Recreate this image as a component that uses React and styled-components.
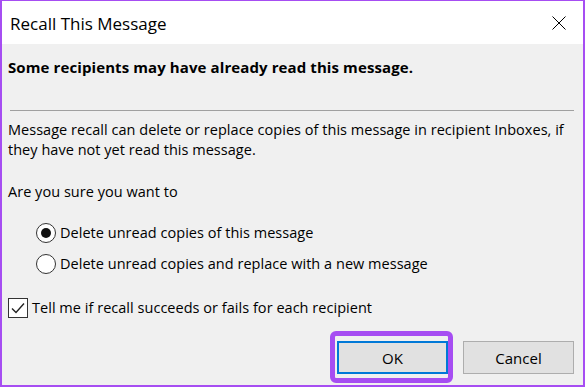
import styled, { createGlobalStyle } from "styled-components";

const GlobalStyle = createGlobalStyle`
    html, body {
        margin: 0;
        padding: 0;
        background: #f0f0f0;
    }
    body {
        font-family: "Open Sans", "Noto Sans", "Liberation Sans", sans-serif;
        color: #000;
    }
`;

const RecallDialog = () => {
    return (
        <Window>
            <GlobalStyle/>
            <TitleBar>
                <span className={'title'}>Recall This Message</span>
                <CloseButton aria-label={'Close'}>
                    <svg width="14" height="14" viewBox="0 0 14 14">
                        <path d="M0.5 0.5 L13.5 13.5 M13.5 0.5 L0.5 13.5" stroke="#000" strokeWidth="1" fill="none"/>
                    </svg>
                </CloseButton>
            </TitleBar>
            <Body>
                <Heading>Some recipients may have already read this message.</Heading>
                <Separator/>
                <Paragraph>
                    Message recall can delete or replace copies of this message in recipient Inboxes, if
                    they have not yet read this message.
                </Paragraph>
                <Question>Are you sure you want to</Question>
                <Options>
                    <OptionRow>
                        <Radio $checked/>
                        <span>Delete unread copies of this message</span>
                    </OptionRow>
                    <OptionRow>
                        <Radio/>
                        <span>Delete unread copies and replace with a new message</span>
                    </OptionRow>
                </Options>
                <CheckRow>
                    <CheckBox>
                        <svg width="14" height="12" viewBox="0 0 14 12">
                            <path d="M1 6.5 L5 10.5 L13 1.5" stroke="#222" strokeWidth="1.4" fill="none"/>
                        </svg>
                    </CheckBox>
                    <span>Tell me if recall succeeds or fails for each recipient</span>
                </CheckRow>
                <Footer>
                    <Button $primary $highlight>OK</Button>
                    <Button>Cancel</Button>
                </Footer>
            </Body>
        </Window>
    );
};

const Window = styled.div`
    box-sizing: border-box;
    width: 585px;
    height: 387px;
    border: 2px solid #a64df2;
    border-top-width: 1px;
    display: flex;
    flex-direction: column;
    background: #f0f0f0;
    overflow: hidden;
`;

const TitleBar = styled.div`
    height: 43px;
    flex-shrink: 0;
    background: #fff;
    display: flex;
    align-items: center;
    justify-content: space-between;
    padding: 0 17px 0 8px;

    .title {
        font-size: 17px;
        letter-spacing: 0;
        margin-top: 1px;
    }
`;

const CloseButton = styled.div`
    display: flex;
    align-items: center;
    justify-content: center;
    width: 14px;
    height: 14px;
`;

const Body = styled.div`
    flex: 1;
    display: flex;
    flex-direction: column;
    padding: 13px 9px 0 6px;
    font-size: 14.5px;
    line-height: 20px;
    letter-spacing: 0.03px;
`;

const Heading = styled.div`
    font-weight: 700;
    font-size: 15px;
    letter-spacing: 0.1px;
`;

const Separator = styled.div`
    height: 1px;
    background: #a0a0a0;
    margin: 33px 0 0 2px;
`;

const Paragraph = styled.p`
    margin: 9px 0 0 0;
`;

const Question = styled.div`
    margin-top: 22px;
`;

const Options = styled.div`
    display: flex;
    flex-direction: column;
    gap: 7px;
    margin-top: 19px;
    padding-left: 28px;
`;

const OptionRow = styled.label`
    display: flex;
    align-items: center;
    gap: 4px;
    height: 24px;
`;

const Radio = styled.span`
    box-sizing: border-box;
    width: 20px;
    height: 20px;
    border-radius: 50%;
    border: 1px solid #333;
    background: #fff;
    display: flex;
    align-items: center;
    justify-content: center;

    &::after {
        content: '';
        width: 10px;
        height: 10px;
        border-radius: 50%;
        background: #111;
        display: ${({$checked}) => ($checked ? 'block' : 'none')};
    }
`;

const CheckRow = styled.label`
    display: flex;
    align-items: center;
    gap: 4px;
    height: 24px;
    margin-top: 20px;
`;

const CheckBox = styled.span`
    box-sizing: border-box;
    width: 20px;
    height: 20px;
    border: 1px solid #333;
    background: #fff;
    display: flex;
    align-items: center;
    justify-content: center;
`;

const Footer = styled.div`
    display: flex;
    justify-content: flex-end;
    gap: 15px;
    margin-top: 21px;
`;

const Button = styled.div`
    position: relative;
    box-sizing: border-box;
    width: 111px;
    height: 33px;
    display: flex;
    align-items: center;
    justify-content: center;
    background: #e1e1e1;
    border: ${({$primary}) => ($primary ? '2px solid #0078d7' : '1px solid #adadad')};
    font-size: 15px;

    &::after {
        content: '';
        display: ${({$highlight}) => ($highlight ? 'block' : 'none')};
        position: absolute;
        top: -12px;
        bottom: -11px;
        left: -9px;
        right: -7px;
        border: 5px solid #a64df2;
        border-radius: 6px;
    }
`;

export default RecallDialog;
